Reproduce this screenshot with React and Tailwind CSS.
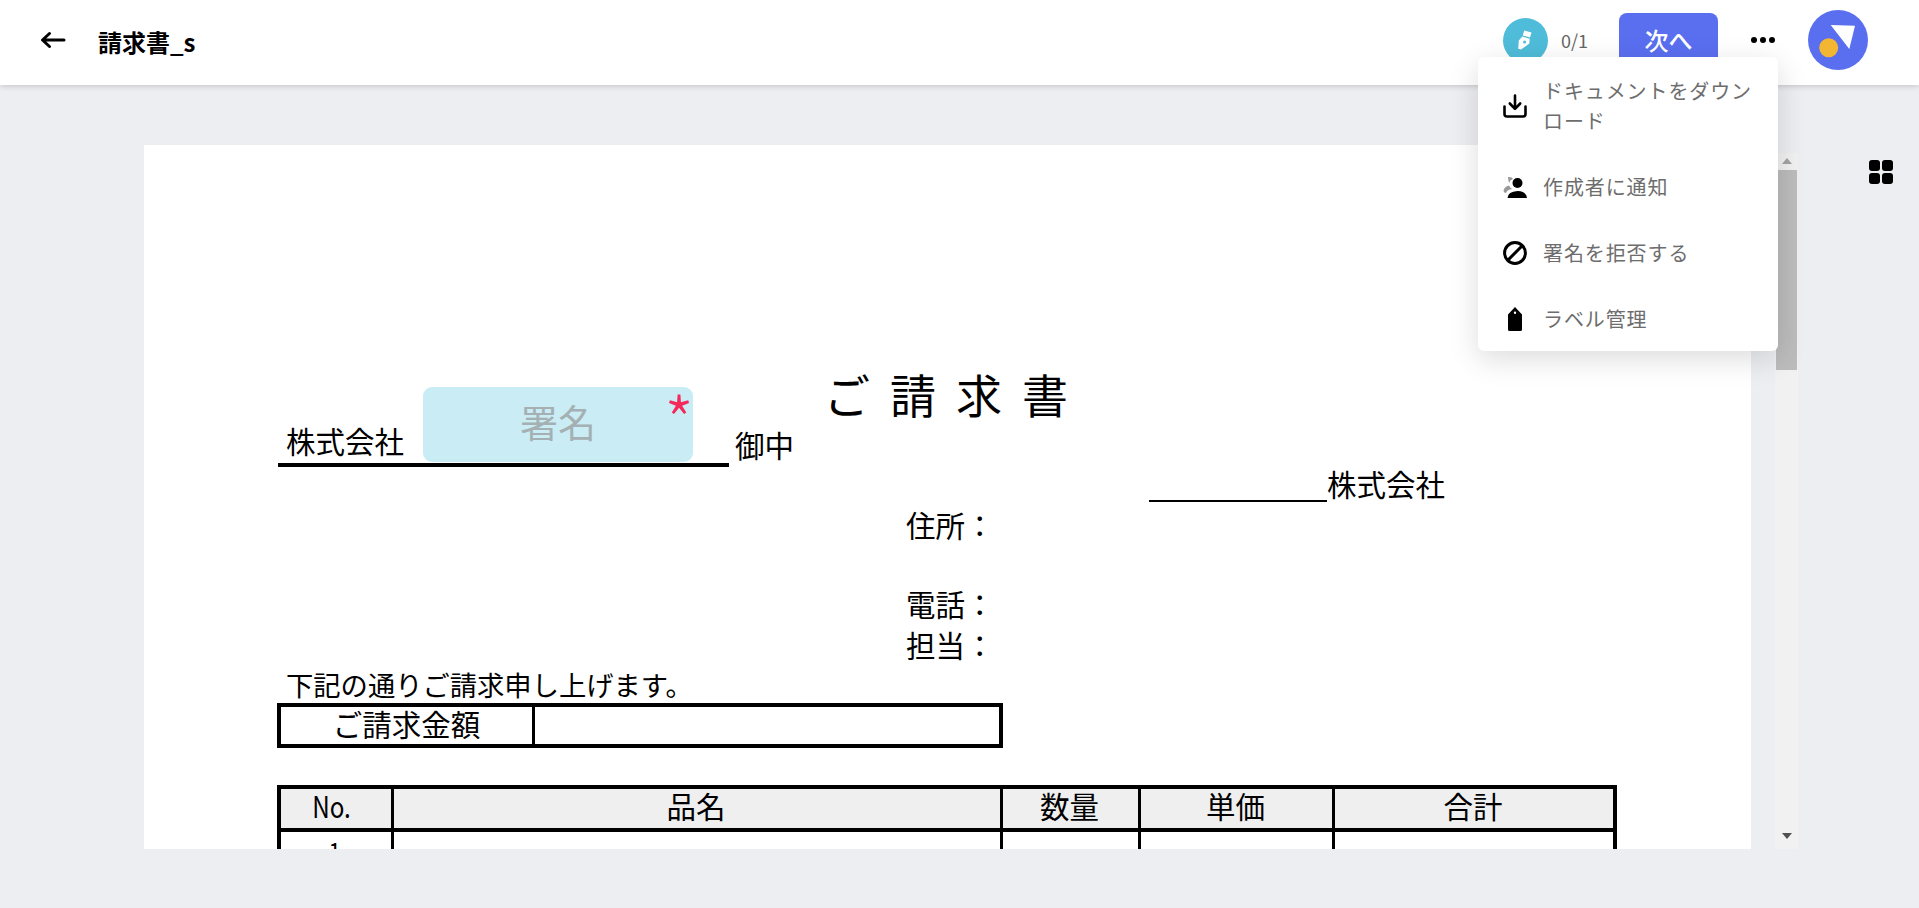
const uiFont = "font-['Noto_Sans_CJK_JP','Noto_Sans',sans-serif]";

const BackArrow = () => (
  <svg width="26" height="18" viewBox="0 0 26 18" fill="none" stroke="#000" strokeWidth="3" strokeLinecap="round" strokeLinejoin="round" className="-mt-[6px] shrink-0">
    <path d="M24 9 H3 M9.5 2.5 L2.5 9 L9.5 15.5" />
  </svg>
);

const PenIcon = () => (
  <svg width="16" height="20" viewBox="0 0 16 20" fill="#fff">
    <path d="M7.2 0.5 L14.5 2.6 L13 7.6 L5.8 5.4 Z" />
    <path fillRule="evenodd" d="M5.3 6.6 L12.6 8.8 L12.4 13.6 L4 19.6 L1.2 18.8 L1.8 10.6 Z M7.6 10.5 A1.5 1.5 0 1 0 7.6 13.5 A1.5 1.5 0 1 0 7.6 10.5 Z" />
  </svg>
);

const Avatar = () => (
  <svg width="60" height="60" viewBox="0 0 60 60" className="shrink-0">
    <circle cx="30" cy="30" r="30" fill="#5a6ff0" />
    <path d="M22.7 15 L47 15.7 L41.3 39 Z" fill="#fff" />
    <circle cx="20.7" cy="37.7" r="9.5" fill="#f2b632" />
  </svg>
);

const DownloadIcon = () => (
  <svg width="24" height="24" viewBox="0 0 24 24" fill="none" stroke="#000" strokeWidth="2.6" strokeLinecap="round" strokeLinejoin="round">
    <path d="M12 1.5 V14.5 M6.8 9.5 L12 14.8 L17.2 9.5" />
    <path d="M1.5 12.5 V20 Q1.5 22.5 4 22.5 H20 Q22.5 22.5 22.5 20 V12.5" />
  </svg>
);

const NotifyIcon = () => (
  <svg width="24" height="24" viewBox="0 0 24 24">
    <circle cx="14.5" cy="8" r="5" fill="#000" />
    <path d="M4.5 23 Q5 16.5 14.5 16 Q23.5 16.5 24 23 Z" fill="#000" />
    <path d="M5 2 Q9 1.5 10 4 Q6.5 5 6.5 8 Q5 6 5 2 Z" fill="#999" />
    <path d="M0.5 16 Q1 11.5 6 10.5 Q7 13 9.5 14 Q4 14.5 3 18 Q1 18 0.5 16 Z" fill="#999" />
  </svg>
);

const BlockIcon = () => (
  <svg width="24" height="24" viewBox="0 0 24 24" fill="none" stroke="#000" strokeWidth="3">
    <circle cx="12" cy="12" r="10.4" />
    <path d="M19.2 4.8 L4.8 19.2" />
  </svg>
);

const TagIcon = () => (
  <svg width="24" height="24" viewBox="0 0 24 24">
    <path fillRule="evenodd" d="M12 0 L19 7.5 V22.5 Q19 24 17.5 24 H6.5 Q5 24 5 22.5 V7.5 Z M12 4.5 A1.2 1.2 0 1 0 12 6.9 A1.2 1.2 0 1 0 12 4.5 Z" fill="#000" />
  </svg>
);

const menuItems = [
  { label: "ドキュメントをダウンロード", Icon: DownloadIcon },
  { label: "作成者に通知", Icon: NotifyIcon },
  { label: "署名を拒否する", Icon: BlockIcon },
  { label: "ラベル管理", Icon: TagIcon },
];

const Header = () => (
  <header className="relative z-10 flex h-[85px] items-center bg-white pl-[40px] pr-[51px] shadow-[0_1px_6px_rgba(0,0,0,0.18)]">
    <BackArrow />
    <h1 className="ml-[32px] -mt-[2px] text-[24px] font-bold text-black">請求書_s</h1>
    <div className="ml-auto flex items-center pb-[5px]">
      <div className="flex h-[45px] w-[45px] items-center justify-center rounded-full bg-[#4fbcd9]">
        <PenIcon />
      </div>
      <span className="ml-[13px] text-[18px] text-[#666]">0/1</span>
      <button className="ml-[31px] h-[54px] w-[99px] rounded-[8px] bg-[#5a6ff0] text-[24px] font-medium text-white">次へ</button>
      <div className="ml-[33px] flex gap-[3px]">
        <span className="h-[6px] w-[6px] rounded-full bg-black" />
        <span className="h-[6px] w-[6px] rounded-full bg-black" />
        <span className="h-[6px] w-[6px] rounded-full bg-black" />
      </div>
      <div className="ml-[33px]">
        <Avatar />
      </div>
    </div>
  </header>
);

const Menu = () => (
  <div className="absolute right-[141px] top-[57px] z-20 w-[300px] rounded-[6px] bg-white shadow-[0_8px_30px_rgba(0,0,0,0.14)]">
    {menuItems.map(({ label, Icon }) => (
      <div key={label} className="flex items-center gap-[16px] pb-[17px] pl-[25px] pr-[18px] pt-[19px]">
        <span className="shrink-0"><Icon /></span>
        <span className="text-[20px] leading-[30px] tracking-[0.9px] text-[#6d6d6d]">{label}</span>
      </div>
    ))}
  </div>
);

const Paper = () => (
  <div className="relative h-[704px] w-[1607px] shrink-0 overflow-hidden bg-white pl-[134px] pt-[222px] text-black">
    <div className="ml-[546px] flex h-[52px] items-center text-[46px] tracking-[20px]">ご請求書</div>

    <div className="relative mt-[6px] flex h-[42px] items-start">
      <div className="h-[42px] w-[451px] border-b-[4px] border-black pl-[8px] text-[29.5px] leading-[31px]">株式会社</div>
      <span className="ml-[6px] text-[29.5px] leading-[38px]">御中</span>
      <div className="absolute left-[145px] top-[-38px] flex h-[75px] w-[270px] items-center justify-center rounded-[9px] bg-[#c9ecf5] pb-[8px] text-[38px] text-[#a5b0b3]">
        署名
        <span className="absolute right-[-1px] top-[-2px] text-[68px] font-light leading-[68px] text-[#f5285a]">*</span>
      </div>
    </div>

    <div className="ml-[871px] flex h-[40px] items-center">
      <div className="mt-[28px] h-[2px] w-[178px] bg-black" />
      <span className="-mt-[8px] text-[29.5px] leading-[36px]">株式会社</span>
    </div>
    <div className="ml-[628px] -mt-[1px] flex h-[39px] items-center pb-[2px] text-[29.5px]">住所：</div>
    <div className="h-[40px]" />
    <div className="ml-[628px] flex h-[40px] items-center pb-[4px] text-[29.5px]">電話：</div>
    <div className="ml-[628px] flex h-[40px] items-center pb-[2px] text-[29.5px]">担当：</div>
    <div className="ml-[8px] flex h-[38px] items-center text-[27.3px]">下記の通りご請求申し上げます。</div>

    <div className="-ml-[1px] grid h-[45px] w-[726px] grid-cols-[254px_1fr] grid-rows-[37px] border-[4px] border-black">
      <div className="flex items-center justify-center border-r-[3px] border-black pb-[5px] text-[29.5px] leading-[30px]">ご請求金額</div>
      <div />
    </div>

    <div className="-ml-[1px] mt-[37px] w-[1340px] border-x-[4px] border-t-[4px] border-black">
      <div className="grid h-[43px] grid-cols-[113px_609px_138px_194px_1fr] grid-rows-[39px] border-b-[4px] border-black bg-[#efefef] text-[29.5px] leading-[30px]">
        <div className="flex items-center justify-center border-r-[3px] border-black pb-[7px] pr-[9px]"><span className="scale-x-[0.82]">No.</span></div>
        <div className="flex items-center justify-center border-r-[3px] border-black pb-[7px] pr-[2px]">品名</div>
        <div className="flex items-center justify-center border-r-[3px] border-black pb-[7px] pr-[2px]">数量</div>
        <div className="flex items-center justify-center border-r-[3px] border-black pb-[7px] pr-[2px]">単価</div>
        <div className="flex items-center justify-center pb-[7px] pr-[2px]">合計</div>
      </div>
      <div className="grid h-[40px] grid-cols-[113px_609px_138px_194px_1fr] text-[28px] leading-[30px]">
        <div className="flex items-start justify-center border-r-[3px] border-black pr-[2px] pt-[4px]"><span className="scale-x-[0.8]">1</span></div>
        <div className="border-r-[3px] border-black" />
        <div className="border-r-[3px] border-black" />
        <div className="border-r-[3px] border-black" />
        <div />
      </div>
    </div>
  </div>
);

const Scrollbar = () => (
  <div className="ml-[24px] flex h-[696px] w-[23px] shrink-0 flex-col items-center bg-[#f1f1f1] pt-[5px]">
    <span className="h-0 w-0 border-x-[5px] border-b-[6px] border-x-transparent border-b-[#a3a3a3]" />
    <div className="mt-[6px] h-[200px] w-[21px] bg-[#bcbcbc]" />
    <div className="flex-1" />
    <span className="mb-[10px] h-0 w-0 border-x-[5px] border-t-[6px] border-x-transparent border-t-[#505050]" />
  </div>
);

const GridIcon = () => (
  <div className="ml-[71px] mt-[15px] grid h-[24px] w-[24px] shrink-0 grid-cols-2 gap-[2px]">
    <span className="rounded-[3px] bg-black" />
    <span className="rounded-[3px] bg-black" />
    <span className="rounded-[3px] bg-black" />
    <span className="rounded-[3px] bg-black" />
  </div>
);

export default function App() {
  return (
    <div className={`relative h-screen overflow-hidden bg-[#edeef2] ${uiFont}`}>
      <Header />
      <Menu />
      <main className="flex items-start pl-[144px] pt-[60px]">
        <Paper />
        <div className="flex items-start pt-[8px]">
          <Scrollbar />
        </div>
        <GridIcon />
      </main>
    </div>
  );
}
